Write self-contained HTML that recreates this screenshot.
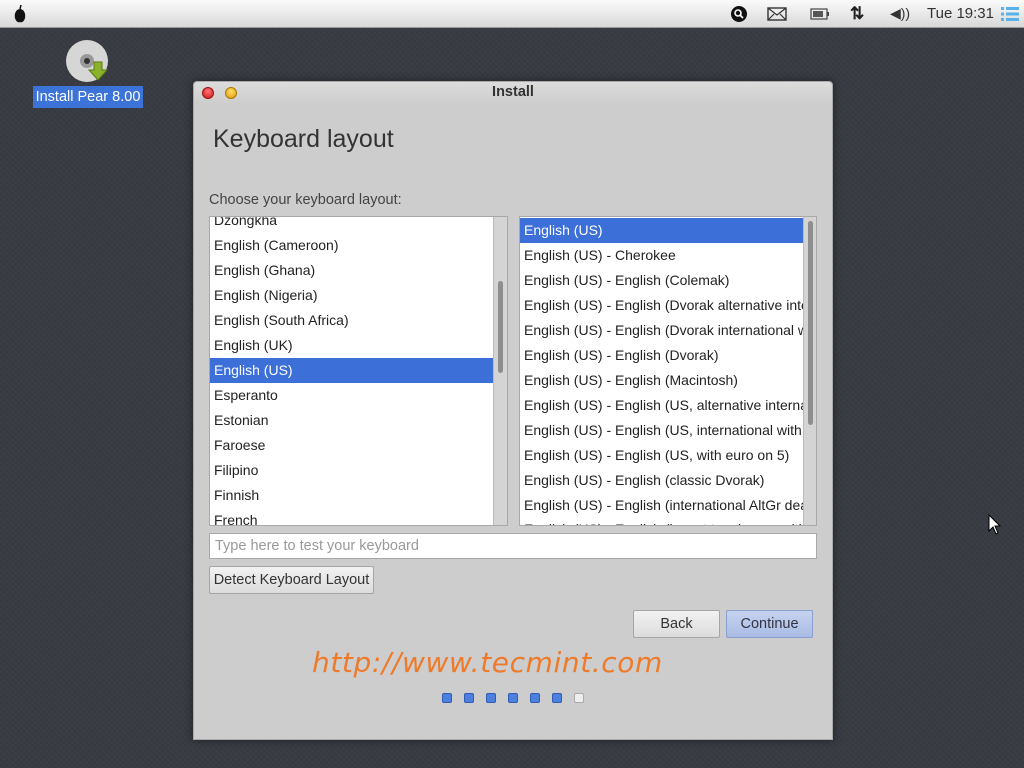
<!DOCTYPE html>
<html><head><meta charset="utf-8"><style>
*{margin:0;padding:0;box-sizing:border-box}
body{width:1024px;height:768px;overflow:hidden;font-family:"Liberation Sans",sans-serif;background:#383b42;position:relative;
background-image:repeating-linear-gradient(45deg,rgba(255,255,255,0.015) 0 2px,transparent 2px 4px),repeating-linear-gradient(-45deg,rgba(0,0,0,0.04) 0 2px,transparent 2px 4px);}
.top{position:absolute;left:0;top:0;width:1024px;height:28px;background:linear-gradient(#fbfbfb,#d8d8d8);border-bottom:1px solid #999}
.abs{position:absolute}
.win{position:absolute;left:193px;top:81px;width:640px;height:659px;background:#cdcdcd;border:1px solid #aaa;border-radius:4px 4px 0 0;box-shadow:0 0 8px rgba(0,0,0,.5)}
.tb{position:absolute;left:0;top:0;width:638px;height:22px;background:linear-gradient(#dcdcdc,#cdcdcd);border-radius:4px 4px 0 0}
.list{position:absolute;background:#fff;border:1px solid #a8a8a8;overflow:hidden}
.row{position:absolute;left:0;height:25px;line-height:25px;font-size:14px;color:#222;padding-left:4px;white-space:nowrap;width:100%}
.sel{background:#3c6fd8;color:#fff}
.sb{position:absolute;background:#d4d4d4;border-left:1px solid #bbb}
.th{position:absolute;background:#8e8e8e;border-radius:3px;width:5px}
.btn{position:absolute;border:1px solid #a5a5a5;border-radius:2px;background:linear-gradient(#f2f2f2,#dcdcdc);font-size:14.5px;color:#333;text-align:center}
.dot{position:absolute;width:10px;height:10px;border-radius:2px;background:#4d7fdf;border:1px solid #2e5cb5}
</style></head><body>
<div class="top">
<svg class="abs" style="left:11px;top:4px" width="18" height="20" viewBox="0 0 18 20"><path d="M9 5 C5 5 3 10 4 14 C5 18 8 19 9 18 C10 19 13 18 14 14 C15 10 13 5 9 5Z" fill="#111"/><path d="M9 5 L10 1" stroke="#111" stroke-width="1.5"/></svg>
<svg class="abs" style="left:731px;top:6px" width="16" height="16"><circle cx="8" cy="8" r="8" fill="#111"/><circle cx="7" cy="7" r="3" fill="none" stroke="#fff" stroke-width="1.6"/><path d="M9 9 L12 12" stroke="#fff" stroke-width="1.8"/></svg>
<svg class="abs" style="left:767px;top:7px" width="20" height="14"><rect x="1" y="1" width="18" height="12" fill="none" stroke="#333" stroke-width="1.4"/><path d="M1 1 L10 8 L19 1 M1 13 L7 7 M19 13 L13 7" fill="none" stroke="#333" stroke-width="1.2"/></svg>
<svg class="abs" style="left:810px;top:8px" width="20" height="12"><rect x="1" y="1" width="16" height="10" fill="none" stroke="#444" stroke-width="1.2"/><rect x="3" y="3" width="10" height="6" fill="#555"/><rect x="17" y="4" width="2" height="4" fill="#444"/></svg>
<div class="abs" style="left:850px;top:4px;font-size:17px;color:#222;font-weight:bold">⇅</div>
<div class="abs" style="left:890px;top:5px;font-size:14px;color:#333">◀))</div>
<div class="abs" style="left:927px;top:5px;font-size:15px;color:#333">Tue 19:31</div>
<svg class="abs" style="left:1001px;top:6px" width="18" height="16"><rect x="0" y="1" width="3" height="3" fill="#5ab0e8"/><rect x="5" y="1" width="13" height="3" fill="#5ab0e8"/><rect x="0" y="6.5" width="3" height="3" fill="#5ab0e8"/><rect x="5" y="6.5" width="13" height="3" fill="#5ab0e8"/><rect x="0" y="12" width="3" height="3" fill="#5ab0e8"/><rect x="5" y="12" width="13" height="3" fill="#5ab0e8"/></svg>
</div>
<svg class="abs" style="left:66px;top:40px" width="46" height="46"><circle cx="21" cy="21" r="21" fill="#d6d6d6"/><circle cx="21" cy="21" r="7" fill="#999"/><circle cx="21" cy="21" r="3" fill="#333"/><path d="M28 22 h8 v8 h5 l-9 10 l-9 -10 h5z" fill="#8ab22a" stroke="#5a7a10"/></svg>
<div class="abs" style="left:33px;top:86px;width:110px;height:22px;background:#3b73d9;color:#fff;font-size:14.5px;line-height:22px;text-align:center">Install Pear 8.00</div>
<svg class="abs" style="left:988px;top:514px" width="14" height="22"><path d="M1 1 L1 17 L5 13 L8 20 L10 19 L7 12 L12 12Z" fill="#fff" stroke="#000"/></svg>

<div class="win">
<div class="tb">
<div class="abs" style="left:8px;top:5px;width:12px;height:12px;border-radius:50%;background:radial-gradient(circle at 50% 35%,#f77,#c11);border:1px solid #911"></div>
<div class="abs" style="left:31px;top:5px;width:12px;height:12px;border-radius:50%;background:radial-gradient(circle at 50% 35%,#fd6,#d90);border:1px solid #a70"></div>
<div class="abs" style="left:0;width:100%;top:2px;text-align:center;font-weight:bold;font-size:14.5px;color:#333">Install</div>
</div>
<div class="abs" style="left:19px;top:43px;font-size:25px;color:#333">Keyboard layout</div>
<div class="abs" style="left:15px;top:110px;font-size:14.5px;color:#444">Choose your keyboard layout:</div>

<div class="list" style="left:15px;top:134px;width:299px;height:310px">
<div class="row" style="top:-9px">Dzongkha</div>
<div class="row" style="top:16px">English (Cameroon)</div>
<div class="row" style="top:41px">English (Ghana)</div>
<div class="row" style="top:66px">English (Nigeria)</div>
<div class="row" style="top:91px">English (South Africa)</div>
<div class="row" style="top:116px">English (UK)</div>
<div class="row sel" style="top:141px;width:283px">English (US)</div>
<div class="row" style="top:166px">Esperanto</div>
<div class="row" style="top:191px">Estonian</div>
<div class="row" style="top:216px">Faroese</div>
<div class="row" style="top:241px">Filipino</div>
<div class="row" style="top:266px">Finnish</div>
<div class="row" style="top:291px">French</div>
<div class="sb" style="left:283px;top:0;width:15px;height:310px"><div class="th" style="left:4px;top:64px;height:92px"></div></div>
</div>

<div class="list" style="left:325px;top:134px;width:298px;height:310px">
<div class="row sel" style="top:1px;width:283px">English (US)</div>
<div class="row" style="top:26px">English (US) - Cherokee</div>
<div class="row" style="top:51px">English (US) - English (Colemak)</div>
<div class="row" style="top:76px">English (US) - English (Dvorak alternative international)</div>
<div class="row" style="top:101px">English (US) - English (Dvorak international with dead keys)</div>
<div class="row" style="top:126px">English (US) - English (Dvorak)</div>
<div class="row" style="top:151px">English (US) - English (Macintosh)</div>
<div class="row" style="top:176px">English (US) - English (US, alternative international)</div>
<div class="row" style="top:201px">English (US) - English (US, international with dead keys)</div>
<div class="row" style="top:226px">English (US) - English (US, with euro on 5)</div>
<div class="row" style="top:251px">English (US) - English (classic Dvorak)</div>
<div class="row" style="top:276px">English (US) - English (international AltGr dead keys)</div>
<div class="row" style="top:300px">English (US) - English (layout toggle on multiply)</div>
<div class="sb" style="left:283px;top:0;width:14px;height:310px"><div class="th" style="left:4px;top:4px;height:204px"></div></div>
</div>

<div class="abs" style="left:15px;top:451px;width:608px;height:26px;background:#fff;border:1px solid #a8a8a8;font-size:14.5px;color:#999;line-height:24px;padding-left:5px">Type here to test your keyboard</div>
<div class="btn" style="left:15px;top:484px;width:165px;height:28px;line-height:26px">Detect Keyboard Layout</div>
<div class="btn" style="left:439px;top:528px;width:87px;height:28px;line-height:26px">Back</div>
<div class="btn" style="left:532px;top:528px;width:87px;height:28px;line-height:26px;background:linear-gradient(#c6d3ef,#a9bce4);border-color:#8a9fcf;color:#334">Continue</div>
<div class="abs" style="left:118px;top:564px;font-family:'DejaVu Sans',sans-serif;font-style:oblique;font-size:28px;color:#ee7a2a;letter-spacing:0.6px">http://www.tecmint.com</div>
<div class="dot" style="left:248px;top:611px"></div>
<div class="dot" style="left:270px;top:611px"></div>
<div class="dot" style="left:292px;top:611px"></div>
<div class="dot" style="left:314px;top:611px"></div>
<div class="dot" style="left:336px;top:611px"></div>
<div class="dot" style="left:358px;top:611px"></div>
<div class="dot" style="left:380px;top:611px;background:#eee;border-color:#aaa"></div>
</div>
</body></html>
